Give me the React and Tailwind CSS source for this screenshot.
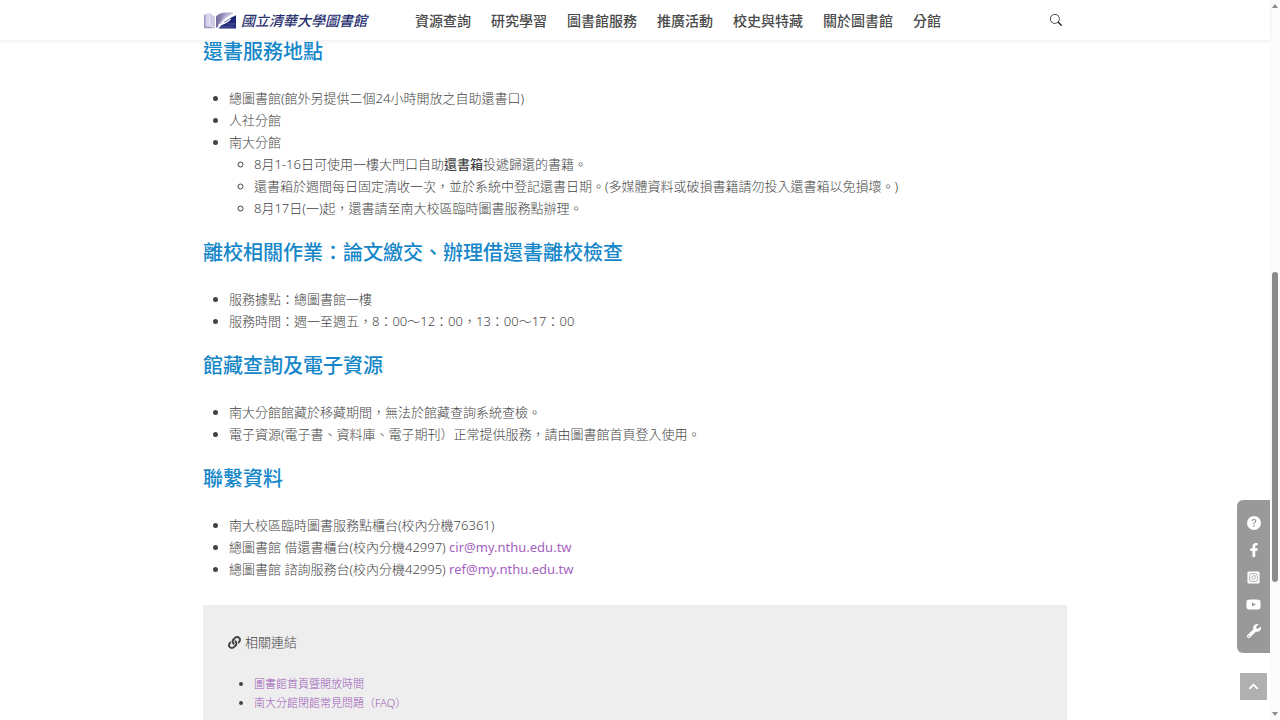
import React from 'react';
import { BsSearch, BsQuestionCircleFill } from 'react-icons/bs';
import { FaFacebookF, FaYoutube, FaWrench, FaLink, FaChevronUp } from 'react-icons/fa';

const navItems = ['資源查詢', '研究學習', '圖書館服務', '推廣活動', '校史與特藏', '關於圖書館', '分館'];

const relatedLinks = ['圖書館首頁暨開放時間', '南大分館閉館常見問題（FAQ）'];

const LogoMark = () => (
  <svg viewBox="0 0 34 17" className="h-[17px] w-[34px] shrink-0" aria-hidden="true">
    <defs>
      <linearGradient id="page" x1="0" x2="1">
        <stop offset="0" stopColor="#6f6798" />
        <stop offset="1" stopColor="#c3bedb" />
      </linearGradient>
    </defs>
    <path d="M1 2.500v13.500h9L6 14.500V1z" fill="#d6d1e8" />
    <path d="M1 3v13.300h12l-6.500-1.800-4 .3V3z" fill="#9d97c2" />
    <path d="M6.500 .8L12 5v10.500L6.500 13.800z" fill="#d0cbe5" />
    <path d="M13 15.500V4.500Q17 0 24 .5H27Q18 6 14.500 15.500z" fill="url(#page)" />
    <path d="M15.500 13Q19 5.500 26 .5L31 .8Q21 5.500 17 13z" fill="#b9b4d6" />
    <path d="M15.500 16.500L19 12.500Q24 7 33 3.200V16.500z" fill="#1f2878" />
    <path d="M15.500 13Q22 12.300 27.500 7" stroke="#fff" strokeWidth="1.300" fill="none" />
    <path d="M24.500 12h7.500M17 14.800h14" stroke="#8d91c0" strokeWidth=".7" strokeDasharray="1.500 .6" />
  </svg>
);

const InstagramIcon = () => (
  <svg viewBox="0 0 14 14" className="size-[13px]" aria-hidden="true">
    <rect x=".5" y=".5" width="13" height="13" rx="1.500" fill="#fff" />
    <rect x="2.800" y="2.800" width="8.400" height="8.400" rx="2" fill="none" stroke="#999" strokeWidth=".8" />
    <circle cx="7" cy="7" r="2" fill="none" stroke="#999" strokeWidth=".8" />
    <circle cx="9.400" cy="4.600" r=".5" fill="#999" />
  </svg>
);

const sideLinks = [
  { label: '常見問題', icon: <BsQuestionCircleFill className="size-[14px]" /> },
  { label: 'Facebook', icon: <FaFacebookF className="size-[14px]" /> },
  { label: 'Instagram', icon: <InstagramIcon /> },
  { label: 'YouTube', icon: <FaYoutube className="size-[15px]" /> },
  { label: '工具', icon: <FaWrench className="size-[14px]" /> },
];

const Header = () => (
  <header className="relative h-10 shrink-0 bg-white shadow-[0_1px_5px_rgba(0,0,0,0.08)]">
    <div className="mx-auto flex h-full w-full max-w-[864px] items-center">
      <a href="#home" className="flex items-center gap-1 text-[14px] font-medium italic text-[#28306f]">
        <LogoMark />
        <span className="whitespace-nowrap">國立清華大學圖書館</span>
      </a>
      <nav className="ml-12 flex gap-5 whitespace-nowrap text-[14px] font-medium text-[#4a4a4a]">
        {navItems.map((item) => (
          <a key={item} href="#menu">{item}</a>
        ))}
      </nav>
      <button type="button" aria-label="搜尋" className="mr-[5px] ml-auto text-[#333]">
        <BsSearch className="size-[12px]" />
      </button>
    </div>
  </header>
);

const Section = ({ title, children }) => (
  <section className="mb-[22px]">
    <h2 className="mb-[23px] text-[20px] leading-[24px] font-medium text-[#1587c9]">{title}</h2>
    <ul className="list-disc pl-[26px] text-[13px] leading-[22px]">{children}</ul>
  </section>
);

const MailLink = ({ address }) => (
  <a href={`mailto:${address}`} className="font-normal text-[#a562bf]">{address}</a>
);

const Article = () => (
  <main className="relative mx-auto w-full max-w-[864px]">
    <Section title="還書服務地點">
      <li>總圖書館(館外另提供二個24小時開放之自助還書口)</li>
      <li>人社分館</li>
      <li>
        南大分館
        <ul className="list-[circle] pl-[25px]">
          <li>8月1-16日可使用一樓大門口自助<strong className="font-medium">還書箱</strong>投遞歸還的書籍。</li>
          <li>還書箱於週間每日固定清收一次，並於系統中登記還書日期。(多媒體資料或破損書籍請勿投入還書箱以免損壞。)</li>
          <li>8月17日(一)起，還書請至南大校區臨時圖書服務點辦理。</li>
        </ul>
      </li>
    </Section>

    <Section title="離校相關作業：論文繳交、辦理借還書離校檢查">
      <li>服務據點：總圖書館一樓</li>
      <li>服務時間：週一至週五，8：00～12：00，13：00～17：00</li>
    </Section>

    <Section title="館藏查詢及電子資源">
      <li>南大分館館藏於移藏期間，無法於館藏查詢系統查檢。</li>
      <li>電子資源(電子書、資料庫、電子期刊）正常提供服務，請由圖書館首頁登入使用。</li>
    </Section>

    <Section title="聯繫資料">
      <li>南大校區臨時圖書服務點櫃台(校內分機76361)</li>
      <li>總圖書館 借還書櫃台(校內分機42997) <MailLink address="cir@my.nthu.edu.tw" /></li>
      <li>總圖書館 諮詢服務台(校內分機42995) <MailLink address="ref@my.nthu.edu.tw" /></li>
    </Section>

    <aside className="mt-[25px] bg-[#eee] px-[25px] py-[26px]">
      <p className="flex items-center gap-1 text-[13px] leading-[22px]">
        <FaLink className="size-[13px]" />
        相關連結
      </p>
      <ul className="mt-[21px] list-disc pl-[26px] text-[11px] leading-[19px]">
        {relatedLinks.map((text) => (
          <li key={text}>
            <a href="#related" className="text-[#9b59b6]">{text}</a>
          </li>
        ))}
      </ul>
    </aside>
  </main>
);

const SideTools = () => (
  <div className="absolute right-0 bottom-5 z-20 flex flex-col items-end gap-5">
    <div className="flex w-[33px] flex-col items-center gap-[13px] rounded-l-md bg-[#999] pt-4 pb-[15px] text-white">
      {sideLinks.map(({ label, icon }) => (
        <a key={label} href="#tool" aria-label={label} className="flex h-[14px] items-center">
          {icon}
        </a>
      ))}
    </div>
    <button type="button" aria-label="回到頂端" className="mr-[3px] flex size-[27px] items-center justify-center rounded-[1px] bg-[#b0b0b0] text-white">
      <FaChevronUp className="size-[11px]" />
    </button>
  </div>
);

const Scrollbar = () => (
  <div className="flex w-[10px] shrink-0 flex-col items-center bg-[#fcfcfc] py-1" aria-hidden="true">
    <svg viewBox="0 0 6 4" className="h-1 w-1.5"><path d="M3 0l3 4H0z" fill="#8a8a8a" /></svg>
    <div className="grow-[264]" />
    <div className="w-[6px] grow-[310] rounded-full bg-[#8b8b8b]" />
    <div className="grow-[130]" />
    <svg viewBox="0 0 6 4" className="h-1 w-1.5"><path d="M0 0h6L3 4z" fill="#8a8a8a" /></svg>
  </div>
);

const App = () => {
  return (
    <div
      lang="zh-Hant"
      className="flex h-screen overflow-hidden bg-white font-['Noto_Sans','Noto_Sans_CJK_TC',sans-serif] font-light text-[#444]"
    >
      <div className="relative flex min-w-0 flex-1 flex-col">
        <Header />
        <div className="min-h-0 flex-1">
          <Article />
        </div>
        <SideTools />
      </div>
      <Scrollbar />
    </div>
  );
};

export default App;
